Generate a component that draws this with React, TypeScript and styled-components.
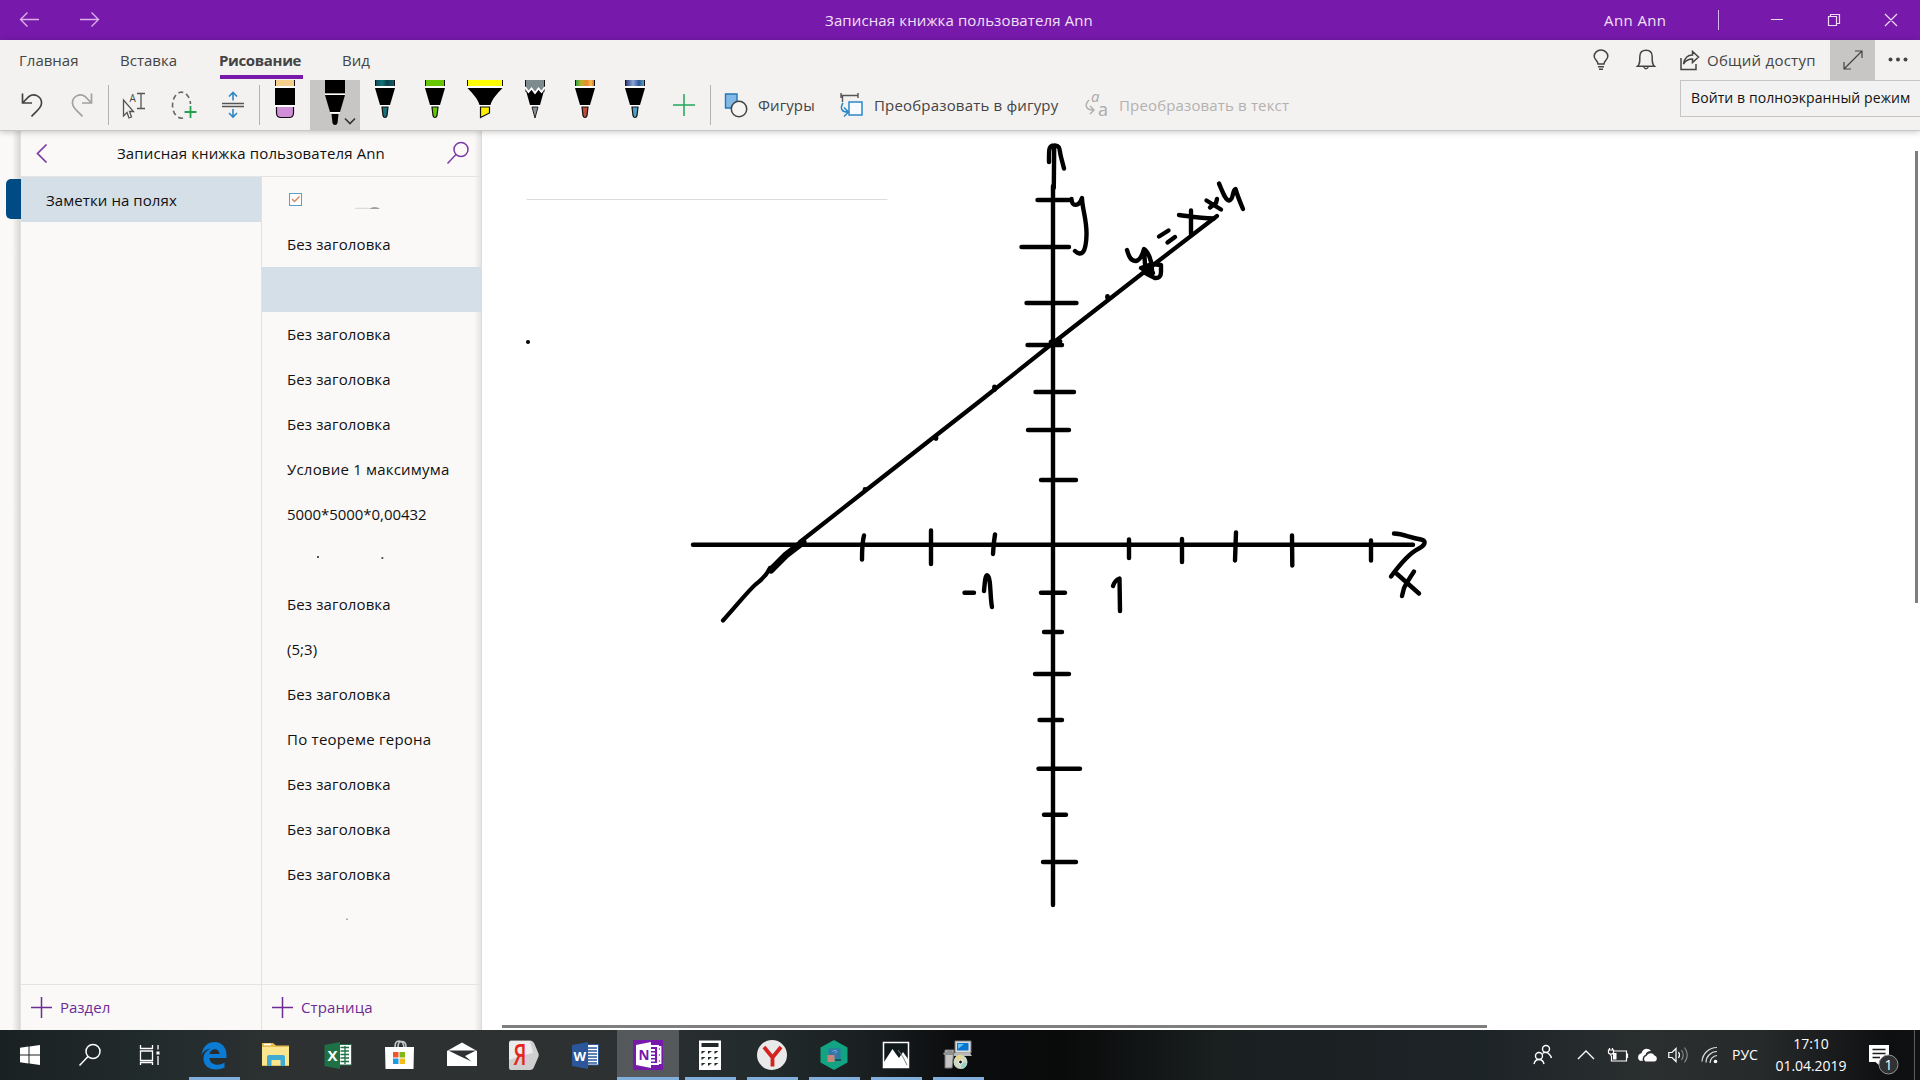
import React from 'react';
import styled, { createGlobalStyle } from 'styled-components';

const Global = createGlobalStyle`
  * { box-sizing: border-box; }
  body { margin: 0; overflow: hidden; background: #fff; }
  svg { display: block; flex: none; overflow: visible; }
`;

const Screen = styled.div`
  width: 1920px;
  height: 1080px;
  display: flex;
  flex-direction: column;
  font-family: 'Open Sans', 'Noto Sans', sans-serif;
  font-size: 15px;
  color: #111;
`;

const Label = styled.span<{ $ls?: number; $size?: number; $bold?: boolean }>`
  white-space: nowrap;
  line-height: 20px;
  letter-spacing: ${(p) => p.$ls ?? 0.12}px;
  font-size: ${(p) => p.$size ?? 15}px;
  font-weight: ${(p) => (p.$bold ? 700 : 400)};
`;

/* ---------- title bar ---------- */
const TitleBar = styled.header`
  height: 40px;
  flex: none;
  background: #7719aa;
  color: #f1e0f8;
  display: grid;
  grid-template-columns: 700px 1fr 700px;
  align-items: center;
`;
const NavArrows = styled.div`
  display: flex;
`;
const TitleText = styled.div`
  text-align: center;
  padding-right: 2px;
`;
const WindowArea = styled.div`
  display: flex;
  align-items: center;
  justify-content: flex-end;
  height: 40px;
`;
const UserName = styled.div`
  width: 62px;
  margin-right: 52px;
`;
const UserDivider = styled.div`
  width: 1px;
  height: 20px;
  background: #d9b5ea;
  margin-right: 30px;
`;

/* ---------- ribbon ---------- */
const Ribbon = styled.section`
  height: 91px;
  flex: none;
  background: #f3f2f1;
  border-bottom: 1px solid #c9c8c7;
  box-shadow: 0 1px 6px rgba(0, 0, 0, 0.22);
  position: relative;
  z-index: 2;
`;
const TabRow = styled.div`
  height: 40px;
  display: flex;
  justify-content: space-between;
`;
const Tabs = styled.nav`
  display: flex;
  padding-left: 19px;
  color: #444;
`;
const Tab = styled.div<{ $width: number; $active?: boolean }>`
  width: ${(p) => p.$width}px;
  height: 39px;
  padding-top: 10px;
  & > i {
    display: block;
    width: 83px;
    height: 4px;
    margin: 5px 0 0 1px;
    background: ${(p) => (p.$active ? '#7719aa' : 'transparent')};
  }
`;
const RibbonRight = styled.div`
  display: flex;
  align-items: center;
  color: #444;
`;
const IconCell = styled.div<{ $w: number; $active?: boolean }>`
  width: ${(p) => p.$w}px;
  height: 40px;
  display: flex;
  align-items: center;
  justify-content: center;
  background: ${(p) => (p.$active ? '#c8c6c4' : 'transparent')};
`;
const ShareText = styled.div`
  width: 123px;
`;
const ToolRow = styled.div`
  height: 50px;
  display: flex;
  align-items: center;
  color: #444;
`;
const ToolCell = styled.div<{ $w: number; $active?: boolean; $shift?: number }>`
  width: ${(p) => p.$w}px;
  height: 50px;
  flex: none;
  display: flex;
  align-items: center;
  justify-content: center;
  padding-right: ${(p) => p.$shift ?? 0}px;
  background: ${(p) => (p.$active ? '#c8c6c4' : 'transparent')};
`;
const Divider = styled.div`
  width: 1px;
  height: 40px;
  background: #b5b3b1;
`;
const ToolButton = styled.div<{ $w: number; $dim?: boolean }>`
  width: ${(p) => p.$w}px;
  display: flex;
  align-items: center;
  gap: 9px;
  color: ${(p) => (p.$dim ? '#b3b1af' : '#444')};
`;
const Tooltip = styled.div`
  position: absolute;
  left: 1680px;
  top: 40px;
  width: 244px;
  height: 37px;
  padding: 6px 0 0 10px;
  border: 1px solid #c6c5c4;
  background: #f2f2f2;
  color: #111;
`;

/* ---------- body ---------- */
const Main = styled.main`
  flex: 1;
  min-height: 0;
  display: flex;
`;
const Rail = styled.aside`
  width: 21px;
  background: linear-gradient(90deg, #faf9f8 0 12px, #d9d8d7 20px, #e9e8e7 21px);
  padding-top: 46px;
  display: flex;
  justify-content: flex-end;
`;
const SectionTab = styled.div`
  width: 15px;
  height: 40px;
  margin-top: 2px;
  background: #004b84;
  border-radius: 5px 0 0 5px;
`;
const Panel = styled.aside`
  width: 461px;
  background: #faf9f8;
  display: flex;
  flex-direction: column;
  border-right: 1px solid #dddcdb;
  box-shadow: inset -7px 0 6px -5px rgba(0, 0, 0, 0.12);
`;
const PanelHeader = styled.div`
  height: 46px;
  flex: none;
  display: flex;
  align-items: center;
  padding: 0 11px 2px 0;
  border-bottom: 1px solid #e5e4e3;
`;
const PanelTitle = styled.div`
  margin: 0 35px 0 54px;
  flex: 1;
`;
const Columns = styled.div`
  flex: 1;
  display: flex;
  min-height: 0;
`;
const Column = styled.div<{ $w: number; $line?: boolean }>`
  width: ${(p) => p.$w}px;
  display: flex;
  flex-direction: column;
  justify-content: space-between;
  border-right: ${(p) => (p.$line ? '1px solid #e3e2e1' : 'none')};
`;
const Row = styled.div<{ $active?: boolean; $lift?: number }>`
  height: 45px;
  padding: 0 0 ${(p) => p.$lift ?? 0}px 25px;
  display: flex;
  align-items: center;
  background: ${(p) => (p.$active ? '#d4dfe8' : 'transparent')};
`;
const AddRow = styled.div`
  height: 46px;
  padding: 0 0 1px 10px;
  border-top: 1px solid #e5e4e3;
  display: flex;
  align-items: center;
  gap: 8px;
  color: #6c2c94;
`;
const Page = styled.section`
  flex: 1;
  background: #fff;
  position: relative;
`;
const Scroll = styled.div<{ $x: number; $y: number; $w: number; $h: number }>`
  position: absolute;
  left: ${(p) => p.$x}px;
  top: ${(p) => p.$y}px;
  width: ${(p) => p.$w}px;
  height: ${(p) => p.$h}px;
  background: #7e7e7e;
`;

/* ---------- taskbar ---------- */
const Taskbar = styled.footer`
  height: 50px;
  flex: none;
  display: flex;
  justify-content: space-between;
  color: #fff;
  background: linear-gradient(90deg, #1a2122 0, #222b2c 150px, #2d3132 280px, #2d3132 600px, #232b2d 760px, #1a2022 860px, #0b0c0d 960px, #090a0a 1060px, #1a1f20 1220px, #1d2427 1480px, #2b2f30 1650px, #272a2b 1760px, #0e0f10 1890px, #101112 1920px);
`;
const Apps = styled.div`
  display: flex;
`;
const SysCell = styled.div`
  width: 60px;
  display: flex;
  align-items: center;
  justify-content: center;
  &:nth-child(3) { margin-right: 3px; }
`;
const AppCell = styled.div<{ $open?: boolean; $active?: boolean }>`
  width: 62px;
  display: flex;
  flex-direction: column;
  align-items: center;
  background: ${(p) => (p.$active ? '#55595b' : 'transparent')};
  & > svg { margin: 5px 0 2px; }
  &::after {
    content: '';
    width: ${(p) => (p.$active ? 62 : 51)}px;
    height: 3px;
    background: ${(p) => (p.$open || p.$active ? '#81aedb' : 'transparent')};
  }
`;
const Tray = styled.div`
  display: flex;
  align-items: center;
`;
const TrayCell = styled.div<{ $w: number }>`
  width: ${(p) => p.$w}px;
  display: flex;
  justify-content: center;
`;
const Clock = styled.div`
  width: 92px;
  display: flex;
  flex-direction: column;
  align-items: center;
  gap: 2px;
`;
const DesktopEdge = styled.div`
  width: 6px;
  height: 50px;
  border-left: 1px solid #5a5d5e;
`;

/* ---------- pens ---------- */
type PenProps = { top: string; tip: string; kind?: string };
const Pen = ({ top, tip, kind }: PenProps) => {
  if (kind === 'eraser')
    return (
      <svg width="50" height="50">
        <rect x="15" y="0" width="20" height="6" fill="#f7cf8d" />
        <path d="M15.5 0V6M34.5 0V6" stroke="#111" />
        <rect x="15" y="6" width="20" height="2" fill="#fff" />
        <rect x="15" y="8" width="20" height="17" fill="#000" />
        <rect x="15" y="25" width="20" height="2" fill="#fff" />
        <path d="M16.5 27V33Q16.5 37.5 21 37.5H29Q33.5 37.5 33.5 33V27" fill="#d08fd6" stroke="#111" strokeWidth="1.2" />
      </svg>
    );
  if (kind === 'selected')
    return (
      <svg width="50" height="50">
        <path d="M15 0H35V13.500H15Z" fill="#000" />
        <path d="M15 14.300H35" stroke="#fff" strokeWidth="1.400" />
        <path d="M15 15H35L30 32H20Z" fill="#000" />
        <path d="M20 32.800H30" stroke="#fff" strokeWidth="1.600" />
        <path d="M21.500 34H28.500L27.500 43Q27 45 25 45T22.500 43Z" fill="#000" />
        <path d="M35 38.500L40 43.500L45 38.500" fill="none" stroke="#333" strokeWidth="1.600" />
      </svg>
    );
  if (kind === 'marker')
    return (
      <svg width="50" height="50">
        <path d="M7 0H43V6H7Z" fill={top} />
        <path d="M7.500 0V6M42.500 0V6" stroke="#111" />
        <path d="M7 7H43" stroke="#fff" strokeWidth="2" />
        <path d="M7.500 8H42.500C37 14 32 19 30.500 25H19.500C18 19 13 14 7.500 8Z" fill="#000" />
        <path d="M19 26H31" stroke="#fff" strokeWidth="2" />
        <path d="M20.500 27H29.500V33L20.500 37.500Z" fill={tip} stroke="#111" strokeWidth="1.200" />
      </svg>
    );
  if (kind === 'pencil')
    return (
      <svg width="50" height="50">
        <path d="M15 0H35V12H15Z" fill={top} />
        <path d="M15.500 0V8M34.500 0V8" stroke="#111" />
        <path d="M15 7L18.500 12L21.500 8.500L25 13L28.500 8.500L31.500 12L35 7L30 25H20Z" fill="#000" />
        <path d="M15 7L18.500 12L21.500 8.500L25 13L28.500 8.500L31.500 12L35 7" fill="none" stroke="#fff" strokeWidth="1.800" />
        <path d="M20 26H30" stroke="#fff" strokeWidth="2" />
        <path d="M22 27H28L25 38Z" fill={tip} stroke="#222" />
      </svg>
    );
  return (
    <svg width="50" height="50">
      <path d="M15 0H35V6H15Z" fill={top} />
      <path d="M15.500 0V6M34.500 0V6" stroke="#111" />
      <path d="M15 7H35" stroke="#fff" strokeWidth="2" />
      <path d="M15 8H35L30 25H20Z" fill="#000" />
      <path d="M20 26H30" stroke="#fff" strokeWidth="2" />
      <path d="M22 27H28L27 35.500Q26.500 37.500 25 37.500T23 35.500Z" fill={tip} stroke="#111" strokeWidth="1.200" />
    </svg>
  );
};

const pens: PenProps[] = [
  { top: '', tip: '', kind: 'eraser' },
  { top: '', tip: '', kind: 'selected' },
  { top: 'url(#galaxyGreen)', tip: '#17707a' },
  { top: '#66c600', tip: '#66c600' },
  { top: '#ffff00', tip: '#ffee00', kind: 'marker' },
  { top: '#7d8a8e', tip: '#8d9194', kind: 'pencil' },
  { top: 'url(#rainbow)', tip: '#c24a38' },
  { top: 'url(#galaxyBlue)', tip: '#4da2c4' },
];

const Gradients = () => (
  <svg width="0" height="0">
    <defs>
      <linearGradient id="galaxyGreen"><stop offset="0" stopColor="#0d4a50" /><stop offset=".35" stopColor="#14737a" /><stop offset=".6" stopColor="#0c4148" /><stop offset="1" stopColor="#15606a" /></linearGradient>
      <linearGradient id="rainbow"><stop offset="0" stopColor="#1d9a4a" /><stop offset=".3" stopColor="#b6b52c" /><stop offset=".6" stopColor="#f0842f" /><stop offset=".8" stopColor="#f3c04b" /><stop offset="1" stopColor="#d05a28" /></linearGradient>
      <linearGradient id="galaxyBlue"><stop offset="0" stopColor="#27306b" /><stop offset=".4" stopColor="#8aa6d8" /><stop offset=".7" stopColor="#2f5896" /><stop offset="1" stopColor="#5fb3c6" /></linearGradient>
    </defs>
  </svg>
);

/* ---------- handwritten graph ---------- */
const yTicks = [
  [200, 1037.5, 1069], [247, 1021.5, 1069], [303, 1026.5, 1076.5], [345, 1027.5, 1062],
  [392, 1035.5, 1074], [430, 1028, 1069], [480, 1041, 1076], [592.7, 1041, 1065],
  [632, 1044, 1062], [674, 1035, 1069], [720, 1039.500, 1062], [768.7, 1038.500, 1080],
  [814.7, 1044, 1066], [862, 1043, 1076],
];

const Ink = () => (
  <svg width="1438" height="899" viewBox="482 131 1438 899" fill="none" stroke="#000" strokeWidth="4.4" strokeLinecap="round" strokeLinejoin="round">
    <path d="M527 199.500H887" stroke="#dcdcdc" strokeWidth="1" />
    <circle cx="528" cy="342" r="2" fill="#000" stroke="none" />
    <path d="M1053 186V905M1054.200 146L1053.800 188M1049 162C1049 150 1048.500 145.500 1054 145.500C1060 145 1059.500 149 1060.500 155L1064 168.500" />
    {yTicks.map(([y, a, b]) => <path key={y} d={`M${a} ${y}H${b}`} />)}
    <path d="M693 544.700H1413" />
    <path d="M864 535.500Q862 543 862 559.500M931 530.500V564M995 534.500Q993.500 543 993 554M1129 539.500V558M1182 539V562M1236 532.500L1235 560.500M1292 535.500L1292.300 565.500M1371 540.500V560.500" />
    <path d="M1394 533.500C1404 534 1408 537 1421 539.500C1428 541 1424 546 1418 549C1410 553 1398 567 1391 576.500" />
    <path d="M1396.500 573.500L1419 593.500M1414 571.500Q1407 582 1404 588L1402 596" />
    <path d="M1113 586Q1115 580 1119.500 578.500L1120 611" />
    <path d="M964.500 592.700H974M984 591C985 580 985.500 574.500 987.500 575.500C991 577 990 598 992 607" />
    <path d="M1217 216L1148 269L1053 343L980 401L865 491L800 542" strokeWidth="4.200" />
    <path d="M803 542L786 555L771 570" strokeWidth="7" />
    <path d="M770 568C765 578 761 580 756 584C748 591 738 604 723 620.500" strokeWidth="4.200" />
    <path d="M1107.500 296.500V297.500M994.500 387V389.500M936 437.500V438.500M865 489.500V490M1051 342L1060 341.500" strokeWidth="4.800" />
    <path d="M1071.500 199C1071.500 207 1079 207 1082 198C1082 208 1087 220 1086.500 235C1086 250 1083 254 1079.500 253.500Q1077 253 1075 251" />
    <path d="M1127 250C1129 257 1131 261 1136 261Q1141 260 1144 249C1148 252 1152 260 1152 270M1144 250L1145 264" />
    <path d="M1149 273L1141 268L1152 264L1161 265L1161 272Q1161 278.500 1155 278L1147 274L1150 267L1153 273L1145 273L1148 267" strokeWidth="4.400" />
    <path d="M1159 236.500L1168.500 230.500M1167.500 242.500L1175 237M1179 215C1188 216 1198 218 1214 218.500M1191 210.500V234" />
    <path d="M1206.500 200.500L1221 209.500M1217 199L1216 203L1210 207.500" />
    <path d="M1219 183.500C1222 190 1225 200 1229 200.500C1234 200 1232 190 1235.500 189C1237 194 1240 202 1243 209" />
  </svg>
);

/* ---------- small icons ---------- */
const Arrow = ({ flip }: { flip?: boolean }) => (
  <svg width="60" height="40" fill="none" stroke="#dcaeeb" strokeWidth="1.4">
    <path d={flip ? 'M20 19.500H38.500M31.500 12.500L38.500 19.500L31.500 26.500' : 'M39 19.500H20.500M27.500 12.500L20.500 19.500L27.500 26.500'} />
  </svg>
);
const Undo = ({ color, flip }: { color: string; flip?: boolean }) => (
  <svg width="24" height="32" fill="none" stroke={color} strokeWidth="1.7">
    <path transform={flip ? 'translate(24 0) scale(-1 1)' : undefined} d="M2.500 4.500V14H12M3 13.500L9 7.500C14 3.500 22 7.500 21.500 14.500C21 20 15 23 11.500 27.500" />
  </svg>
);
const Plus = ({ size, color }: { size: number; color: string }) => (
  <svg width={size} height={size} stroke={color} strokeWidth="1.5"><path d={`M0 ${size / 2}H${size}M${size / 2} 0V${size}`} /></svg>
);
const Magnifier = ({ color, r = 7 }: { color: string; r?: number }) => (
  <svg width="24" height="24" fill="none" stroke={color} strokeWidth="1.5"><circle cx="15" cy="8.500" r={r} /><path d="M10 13.500L1.500 22.500" /></svg>
);

const pages: React.ReactNode[] = [
  <svg key="c" width="110" height="24" viewBox="0 0 110 24">
    <rect x="2.500" y="5.500" width="12" height="12" fill="#fff" stroke="#5aa0c8" />
    <path d="M5 11L7.500 13.500L12.500 8.500" fill="none" stroke="#d98a5c" strokeWidth="1.500" />
    <path d="M68 20.300H82" stroke="#c9c9c9" strokeWidth=".8" />
    <path d="M82 20.500Q88 18.500 93 20.500Z" fill="#444" />
  </svg>,
  'Без заголовка', '', 'Без заголовка', 'Без заголовка', 'Без заголовка',
  'Условие 1 максимума', '5000*5000*0,00432',
  <svg key="d" width="110" height="24"><path d="M30 9h2v2h-2zM94.500 10h1.800v2h-1.800z" fill="#555" /></svg>,
  'Без заголовка', '(5;3)', 'Без заголовка', 'По теореме герона',
  'Без заголовка', 'Без заголовка', 'Без заголовка',
  <svg key="e" width="110" height="24"><path d="M59 11.500h2v1.500h-2z" fill="#a5b2b5" /></svg>,
];

const spacing: Record<string, number> = { '5000*5000*0,00432': -0.06, 'Условие 1 максимума': 0.2, 'По теореме герона': 0.25, '(5;3)': 0.05 };

const logos: { open?: boolean; active?: boolean; art: React.ReactNode }[] = [
  { open: true, art: <path d="M8.500 20C10 9.500 17 7 21.500 7C29 7 33.500 13 33.500 19.500V23H16.500C17 31 27 31 31.500 27.500V32.500C24 36.500 10.500 35 10.500 23.500C10.500 18.500 14 15 17.500 13.500C13 14 10 17 8.500 20ZM16.500 19H26.500C26.500 12.500 17.500 12.500 16.500 19Z" fill="#0c7bd4" /> },
  { art: <><path d="M7 8H18L21 10.500H34V31H7Z" fill="#e8be51" /><path d="M7 12H34V30H7Z" fill="#fbe58f" /><path d="M9 9.500H16" stroke="#fff" strokeWidth="1.500" /><path d="M12 31V22Q12 20 14 20H28Q30 20 30 22V31H25.500V25H16.500V31Z" fill="#3faad2" /></> },
  { art: <g transform="translate(-1 0)"><path d="M22 9.500H35.500V30H22Z" fill="#fff" stroke="#1e7145" /><path d="M24.500 12.500H33M24.500 16H33M24.500 19.500H33M24.500 23H33M24.500 26.500H33M29 11V29" stroke="#1e7145" strokeWidth="1.300" /><path d="M8.500 10L24 7V34L8.500 31Z" fill="#1e7145" /><text x="11.500" y="26" fontSize="15" fontWeight="700" fill="#fff">X</text></g> },
  { art: <g transform="translate(-1 0)"><path d="M17 12Q17 6 21 6T26 12M20 12Q20 7 23 6.500Q28 6 28 12" fill="none" stroke="#c9c9c9" strokeWidth="1.600" /><path d="M7 12H36L35.500 34H7.500Z" fill="#fff" /><path d="M15 17H20.500V22.500H15Z" fill="#f2552c" /><path d="M21.500 17H27V22.500H21.500Z" fill="#80b71b" /><path d="M15 23.500H20.500V29H15Z" fill="#1f9be0" /><path d="M21.500 23.500H27V29H21.500Z" fill="#f5bb18" /></g> },
  { art: <><path d="M6 16L21 7.500L36 16V31H6Z" fill="#fff" /><path d="M7.500 15.500H35L24 21L30.500 26.500L17.500 20.500Z" fill="#2d3132" /></> },
  { art: <><path d="M8 5.500H27Q30 5.500 31.500 9L35.500 18.500Q36 20 35.500 21.500L31 32Q30 35 27 35H8Q6 35 6 33V7.500Q6 5.500 8 5.500Z" fill="#cfcfcf" /><path d="M8 6H27L30 18Q18 20 6 25V8Z" fill="#ececec" /><text x="10.500" y="30" fontSize="28" fontWeight="600" fill="#e52620" textLength="13" lengthAdjust="spacingAndGlyphs">Я</text></> },
  { art: <g transform="translate(-1 0)"><path d="M22 9.500H34.500V30H22Z" fill="#fff" stroke="#2b579a" /><path d="M24 13H33M24 16H33M24 19H33M24 22H33M24 25H33M24 28H33" stroke="#2b579a" strokeWidth="1.300" /><path d="M8 10L24 7V34L8 31Z" fill="#2b579a" /><text x="9.500" y="25.500" fontSize="13" fontWeight="700" fill="#fff">W</text></g> },
  { active: true, art: <g transform="translate(1 0)"><rect x="5" y="5" width="30" height="30" fill="#7719aa" /><path d="M23 11H30V29H23M23 15H27M23 18.500H27M23 22H27M23 25.500H27M30 12H32.500V16H30M30 18H32.500V22H30M30 24H32.500V28H30" fill="none" stroke="#fff" strokeWidth="1.800" /><path d="M8 10L23 7V33L8 30Z" fill="#fff" /><text x="10.500" y="25" fontSize="13.500" fontWeight="700" fill="#7719aa">N</text></g> },
  { open: true, art: <><path d="M10 5.500H32V35H10Z" fill="#fff" /><path d="M12.500 8H29.500V12H12.500Z" fill="#222829" />{[16, 22, 28].map((y) => [12.5, 19, 25.5].map((x) => <path key={`${x}-${y}`} d={`M${x} ${y}h4l-4 3z`} fill="#222829" />))}</> },
  { open: true, art: <><circle cx="21" cy="20" r="15" fill="#e9e9e9" /><path d="M13 12L21.500 22.500L30 12M21.500 21V31.500" fill="none" stroke="#d3221f" strokeWidth="3.800" /></> },
  { open: true, art: <><path d="M21 5L34.500 12.500V27.500L21 35L7.500 27.500V12.500Z" fill="#12a383" /><rect x="15.500" y="13.500" width="12" height="10" fill="#3376a8" /><path d="M19.500 16.500Q22 14 24 16.500L22 18.500" stroke="#75b4dc" fill="none" /><rect x="14.500" y="20" width="7" height="7" fill="#c98578" /><path d="M22 25H28" stroke="#174f63" strokeWidth="2" /></> },
  { open: true, art: <><path d="M8.500 7.500H33.500V32.500H8.500Z" fill="#11191a" stroke="#fff" strokeWidth="1.500" /><path d="M9 27L17.500 14L21 19L24 23L28 17L33 24V32H9Z" fill="#fff" /><path d="M23 15L28 22L32 30" stroke="#7c8082" fill="none" /></> },
  { open: true, art: <><path d="M18 6H34V18H18Z" fill="#ddd" stroke="#777" /><path d="M20 8H31.500V15.500H20Z" fill="#0874d2" /><path d="M21 9L27 9L21 14Z" fill="#62c3f4" /><path d="M17 18H33L35 21H17Z" fill="#b9b9b9" /><path d="M8 15H17L15 33H8Z" fill="#c5c5c5" stroke="#777" /><path d="M6 18L14 15L16 17V20H7Z" fill="#909090" /><circle cx="23.500" cy="27" r="7" fill="#cfdac3" /><path d="M23.500 27L18 22.500A7 7 0 0 1 25 20Z" fill="#e5d48a" /><path d="M23.500 27L30 28A7 7 0 0 1 25 34Z" fill="#98cfc6" /><circle cx="23.500" cy="27" r="2" fill="#171717" stroke="#fff" /></> },
];

export default function App() {
  return (
    <Screen>
      <Global />
      <TitleBar>
        <NavArrows><Arrow /><Arrow flip /></NavArrows>
        <TitleText><Label>Записная книжка пользователя Ann</Label></TitleText>
        <WindowArea>
          <UserName><Label $ls={0.4}>Ann Ann</Label></UserName>
          <UserDivider />
          <svg width="171" height="40" fill="none" stroke="#f0dcf7" strokeWidth="1.2">
            <path d="M22 19.500H34M79.500 16.500H87.500V25.500H79.500ZM81.500 16V14.500H90.500V23.500H88M136 14L148 26M148 14L136 26" />
          </svg>
        </WindowArea>
      </TitleBar>

      <Ribbon>
        <TabRow>
          <Tabs>
            <Tab $width={101}><Label $ls={0}>Главная</Label></Tab>
            <Tab $width={99}><Label $ls={0}>Вставка</Label></Tab>
            <Tab $width={123} $active><Label $bold $ls={-0.36}>Рисование</Label><i /></Tab>
            <Tab $width={60}><Label $ls={0}>Вид</Label></Tab>
          </Tabs>
          <RibbonRight>
            <IconCell $w={45}>
              <svg width="18" height="22" fill="none" stroke="#444" strokeWidth="1.5"><path d="M6 15C6 11.500 2.200 11 2.200 7.300A6.800 6.300 0 0 1 15.800 7.300C15.800 11 12 11.500 12 15ZM6 17.800H12M7 20.200H11" /></svg>
            </IconCell>
            <IconCell $w={45}>
              <svg width="20" height="22" fill="none" stroke="#444" strokeWidth="1.5"><path d="M1.500 17.300H18.500C16 15 16.200 13 16.200 7.500C16.200 3 13.500 1.200 10 1.200S3.800 3 3.800 7.500C3.800 13 4 15 1.500 17.300ZM7.500 17.500Q10 22 12.500 17.500" /></svg>
            </IconCell>
            <IconCell $w={39}>
              <svg width="16" height="22" fill="none" stroke="#444" strokeWidth="1.500"><path d="M1 9V20.500H16V15M3.500 15C4.500 9 8 6 12.500 6V2.500L18.500 8L12.500 13.500V10C8.500 10 6 11 3.500 15Z" /></svg>
            </IconCell>
            <ShareText><Label $ls={0.25}>Общий доступ</Label></ShareText>
            <IconCell $w={45} $active>
              <svg width="20" height="20" fill="none" stroke="#444" strokeWidth="1.200"><path d="M1 19L19 1M12 1H19V8M1 12V19H8" /></svg>
            </IconCell>
            <IconCell $w={45}>
              <svg width="20" height="6" fill="#444"><circle cx="2.500" cy="2.500" r="2" /><circle cx="10" cy="2.500" r="2" /><circle cx="17.500" cy="2.500" r="2" /></svg>
            </IconCell>
          </RibbonRight>
        </TabRow>
        <ToolRow>
          <ToolCell $w={64}><Undo color="#444" /></ToolCell>
          <ToolCell $w={44} $shift={8}><Undo color="#a3a19f" flip /></ToolCell>
          <Divider />
          <ToolCell $w={49}>
            <svg width="24" height="30" fill="none" stroke="#555" strokeWidth="1.300"><path d="M1.500 10V26L5 22.500L7 28L9.500 27L7.500 21.500H11.500Z" /><text x="7.500" y="12" fontSize="10" fill="#444" stroke="none">A</text><path d="M15 3.500H23M19 3.500V18.500M15 18.500H23" /></svg>
          </ToolCell>
          <ToolCell $w={52} $shift={1}>
            <svg width="26" height="32" fill="none"><path d="M12 29A9 13 0 1 1 19.500 15" stroke="#666" strokeWidth="1.600" strokeDasharray="5 3.200" /><path d="M19.500 17V29M13.500 23H25.500" stroke="#22a04b" strokeWidth="1.800" /></svg>
          </ToolCell>
          <ToolCell $w={49} $shift={4}>
            <svg width="24" height="32" fill="none"><path d="M1 14.500H23M1 17.500H23" stroke="#555" strokeWidth="1.400" /><path d="M12 11.500V3.500M8 7.500L12 3.500L16 7.500M12 20V28M8 24L12 28L16 24" stroke="#2b88c8" strokeWidth="1.600" /></svg>
          </ToolCell>
          <Divider />
          <Gradients />
          {pens.map((p, i) => <ToolCell key={i} $w={50} $active={i === 1}><Pen {...p} /></ToolCell>)}
          <ToolCell $w={50} $shift={2}><Plus size={22} color="#22a55a" /></ToolCell>
          <Divider />
          <ToolButton $w={129}>
            <svg width="38" height="26" fill="none"><path d="M14.500 2H26V16H14.500Z" fill="#82b9e6" stroke="#2478b8" strokeWidth="1.400" /><circle cx="28" cy="17" r="7.700" fill="#f6f5f4" stroke="#444" strokeWidth="1.500" /></svg>
            <Label $ls={0.1}>Фигуры</Label>
          </ToolButton>
          <ToolButton $w={245}>
            <svg width="25" height="26" fill="none"><path d="M1 3.500H18M1 1V6M18 1V6M2.500 3.500V10" stroke="#555" strokeWidth="1.400" /><path d="M9 10H22V23H9V10Z" fill="#f8fbfd" stroke="#2b88c8" strokeWidth="1.500" /><path d="M3 11C-.500 17 2 20 8 20M4 15.500L8.500 20L4 24.500" stroke="#2b88c8" strokeWidth="1.500" /></svg>
            <Label $ls={0.18}>Преобразовать в фигуру</Label>
          </ToolButton>
          <ToolButton $w={220} $dim>
            <svg width="25" height="36" fill="#aaa"><text x="6" y="15" fontSize="15" fontStyle="italic">a</text><text x="13" y="29" fontSize="18">a</text><path d="M4 13C-1 18 1 23 8 23M5 19L9 23L5 27" fill="none" stroke="#b3b1af" strokeWidth="1.500" /></svg>
            <Label $ls={0.15}>Преобразовать в текст</Label>
          </ToolButton>
        </ToolRow>
        <Tooltip><Label $size={14} $ls={0.09}>Войти в полноэкранный режим</Label></Tooltip>
      </Ribbon>

      <Main>
        <Rail><SectionTab /></Rail>
        <Panel>
          <PanelHeader>
            <svg width="42" height="24" fill="none" stroke="#7b3aa5" strokeWidth="1.700"><path d="M25.500 3.500L16.500 12.500L25.500 21.500" /></svg>
            <PanelTitle><Label>Записная книжка пользователя Ann</Label></PanelTitle>
            <Magnifier color="#7b3aa5" />
          </PanelHeader>
          <Columns>
            <Column $w={241} $line>
              <Row $active><Label $ls={0.08}>Заметки на полях</Label></Row>
              <AddRow><Plus size={21} color="#6c2c94" /><Label $ls={0}>Раздел</Label></AddRow>
            </Column>
            <Column $w={219}>
              <div>
                {pages.map((p, i) => (
                  <Row key={i} $active={i === 2} $lift={i === 0 ? 0 : 2}>
                    {typeof p === 'string' ? <Label $ls={spacing[p]}>{p}</Label> : p}
                  </Row>
                ))}
              </div>
              <AddRow><Plus size={21} color="#6c2c94" /><Label>Страница</Label></AddRow>
            </Column>
          </Columns>
        </Panel>
        <Page>
          <Ink />
          <Scroll $x={1433} $y={20} $w={3} $h={452} />
          <Scroll $x={20} $y={894} $w={985} $h={3} />
        </Page>
      </Main>

      <Taskbar>
        <Apps>
          <SysCell><svg width="20" height="20" fill="#fff"><path d="M0 2.800L8.500 1.500V9.500H0ZM9.500 1.400L20 0V9.500H9.500ZM0 10.500H8.500V18.500L0 17.200ZM9.500 10.500H20V20L9.500 18.600Z" /></svg></SysCell>
          <SysCell><Magnifier color="#fff" /></SysCell>
          <SysCell><svg width="22" height="22" fill="none" stroke="#fff" strokeWidth="1.300"><path d="M1.500 1V4.500H13.500V1M1.500 7H13.500V16.500H1.500ZM1.500 21V18.500H13.500V21M19 1V5.500M19 12V21" /><path d="M17.500 7.500H20.500V10.500H17.500Z" fill="#fff" stroke="none" /></svg></SysCell>
          {logos.map((l, i) => (
            <AppCell key={i} $open={l.open} $active={l.active}><svg width="42" height="40">{l.art}</svg></AppCell>
          ))}
        </Apps>
        <Tray>
          <TrayCell $w={44}>
            <svg width="16" height="22" fill="none" stroke="#fff" strokeWidth="1.400"><circle cx="13" cy="5" r="3.500" /><circle cx="6" cy="12" r="3.500" /><path d="M1 20Q2 15.500 6 15.500T11 20M9.500 9.500Q13 7 16 10Q18 12 18.500 14" /></svg>
          </TrayCell>
          <TrayCell $w={44}><svg width="14" height="12" fill="none" stroke="#fff" strokeWidth="1.300"><path d="M0 10L8 2L16 10" /></svg></TrayCell>
          <TrayCell $w={20}>
            <svg width="18" height="16" fill="none" stroke="#fff" strokeWidth="1.200"><path d="M6 4H18.500V14H3.500V9M18.500 7H19.500V11M1.500 1V3M4.500 1V3M.5 3H5.500V6Q3 8.500 .5 6ZM3 7V9" /><path d="M5 6H8.500V12.500H5Z" fill="#fff" stroke="none" /></svg>
          </TrayCell>
          <TrayCell $w={40}>
            <svg width="20" height="14" fill="#fff"><path d="M6 13A4 4 0 0 1 4.500 5.500C5 1 11 -1 14 3C11 3 9 4.500 8.500 7C6 7.500 5 10 6 13Z" /><path d="M8.500 13.500A3 3 0 0 1 9.500 8A4.500 4.500 0 0 1 17.500 7.500A3.200 3.200 0 0 1 18 13.500Z" /><path d="M4 13A4 4 0 0 1 4.500 5.200L7 7Z" /></svg>
          </TrayCell>
          <TrayCell $w={20}>
            <svg width="18" height="18" fill="none" stroke="#fff" strokeWidth="1.200"><path d="M.8 6.500H4L8 2.500V15.500L4 11.500H.8ZM10.500 6Q12.500 9 10.500 12" /><path d="M13.500 4Q17 9 13.500 14M16.500 1.500Q22 9 16.500 16.500" stroke="#888" /></svg>
          </TrayCell>
          <TrayCell $w={44}>
            <svg width="17" height="18" fill="none" stroke="#ddd" strokeWidth="1.200"><path d="M1 15.500A15 15 0 0 1 16 1.500M5 16.500A11 11 0 0 1 16 5.500M9 17A7.500 7.500 0 0 1 16 9.500" /><circle cx="14.500" cy="15.500" r="1.800" fill="#fff" stroke="none" /></svg>
          </TrayCell>
          <TrayCell $w={28}><Label $size={14} $ls={0}>РУС</Label></TrayCell>
          <TrayCell $w={6} />
          <Clock><Label $size={14} $ls={0}>17:10</Label><Label $size={14} $ls={-0.06}>01.04.2019</Label></Clock>
          <TrayCell $w={57}>
            <svg width="40" height="40" fill="none"><path d="M3 10H23V27H14V31L9.500 27H3Z" fill="#fff" /><path d="M6.500 14.500H19.500M6.500 18.500H19.500M6.500 22.500H14" stroke="#1a1b1c" strokeWidth="1.300" /><circle cx="22.500" cy="29.500" r="9.500" fill="#303233" stroke="#8f9192" /><text x="22.500" y="34.500" textAnchor="middle" fontSize="14" fill="#fff">1</text></svg>
          </TrayCell>
          <DesktopEdge />
        </Tray>
      </Taskbar>
    </Screen>
  );
}
